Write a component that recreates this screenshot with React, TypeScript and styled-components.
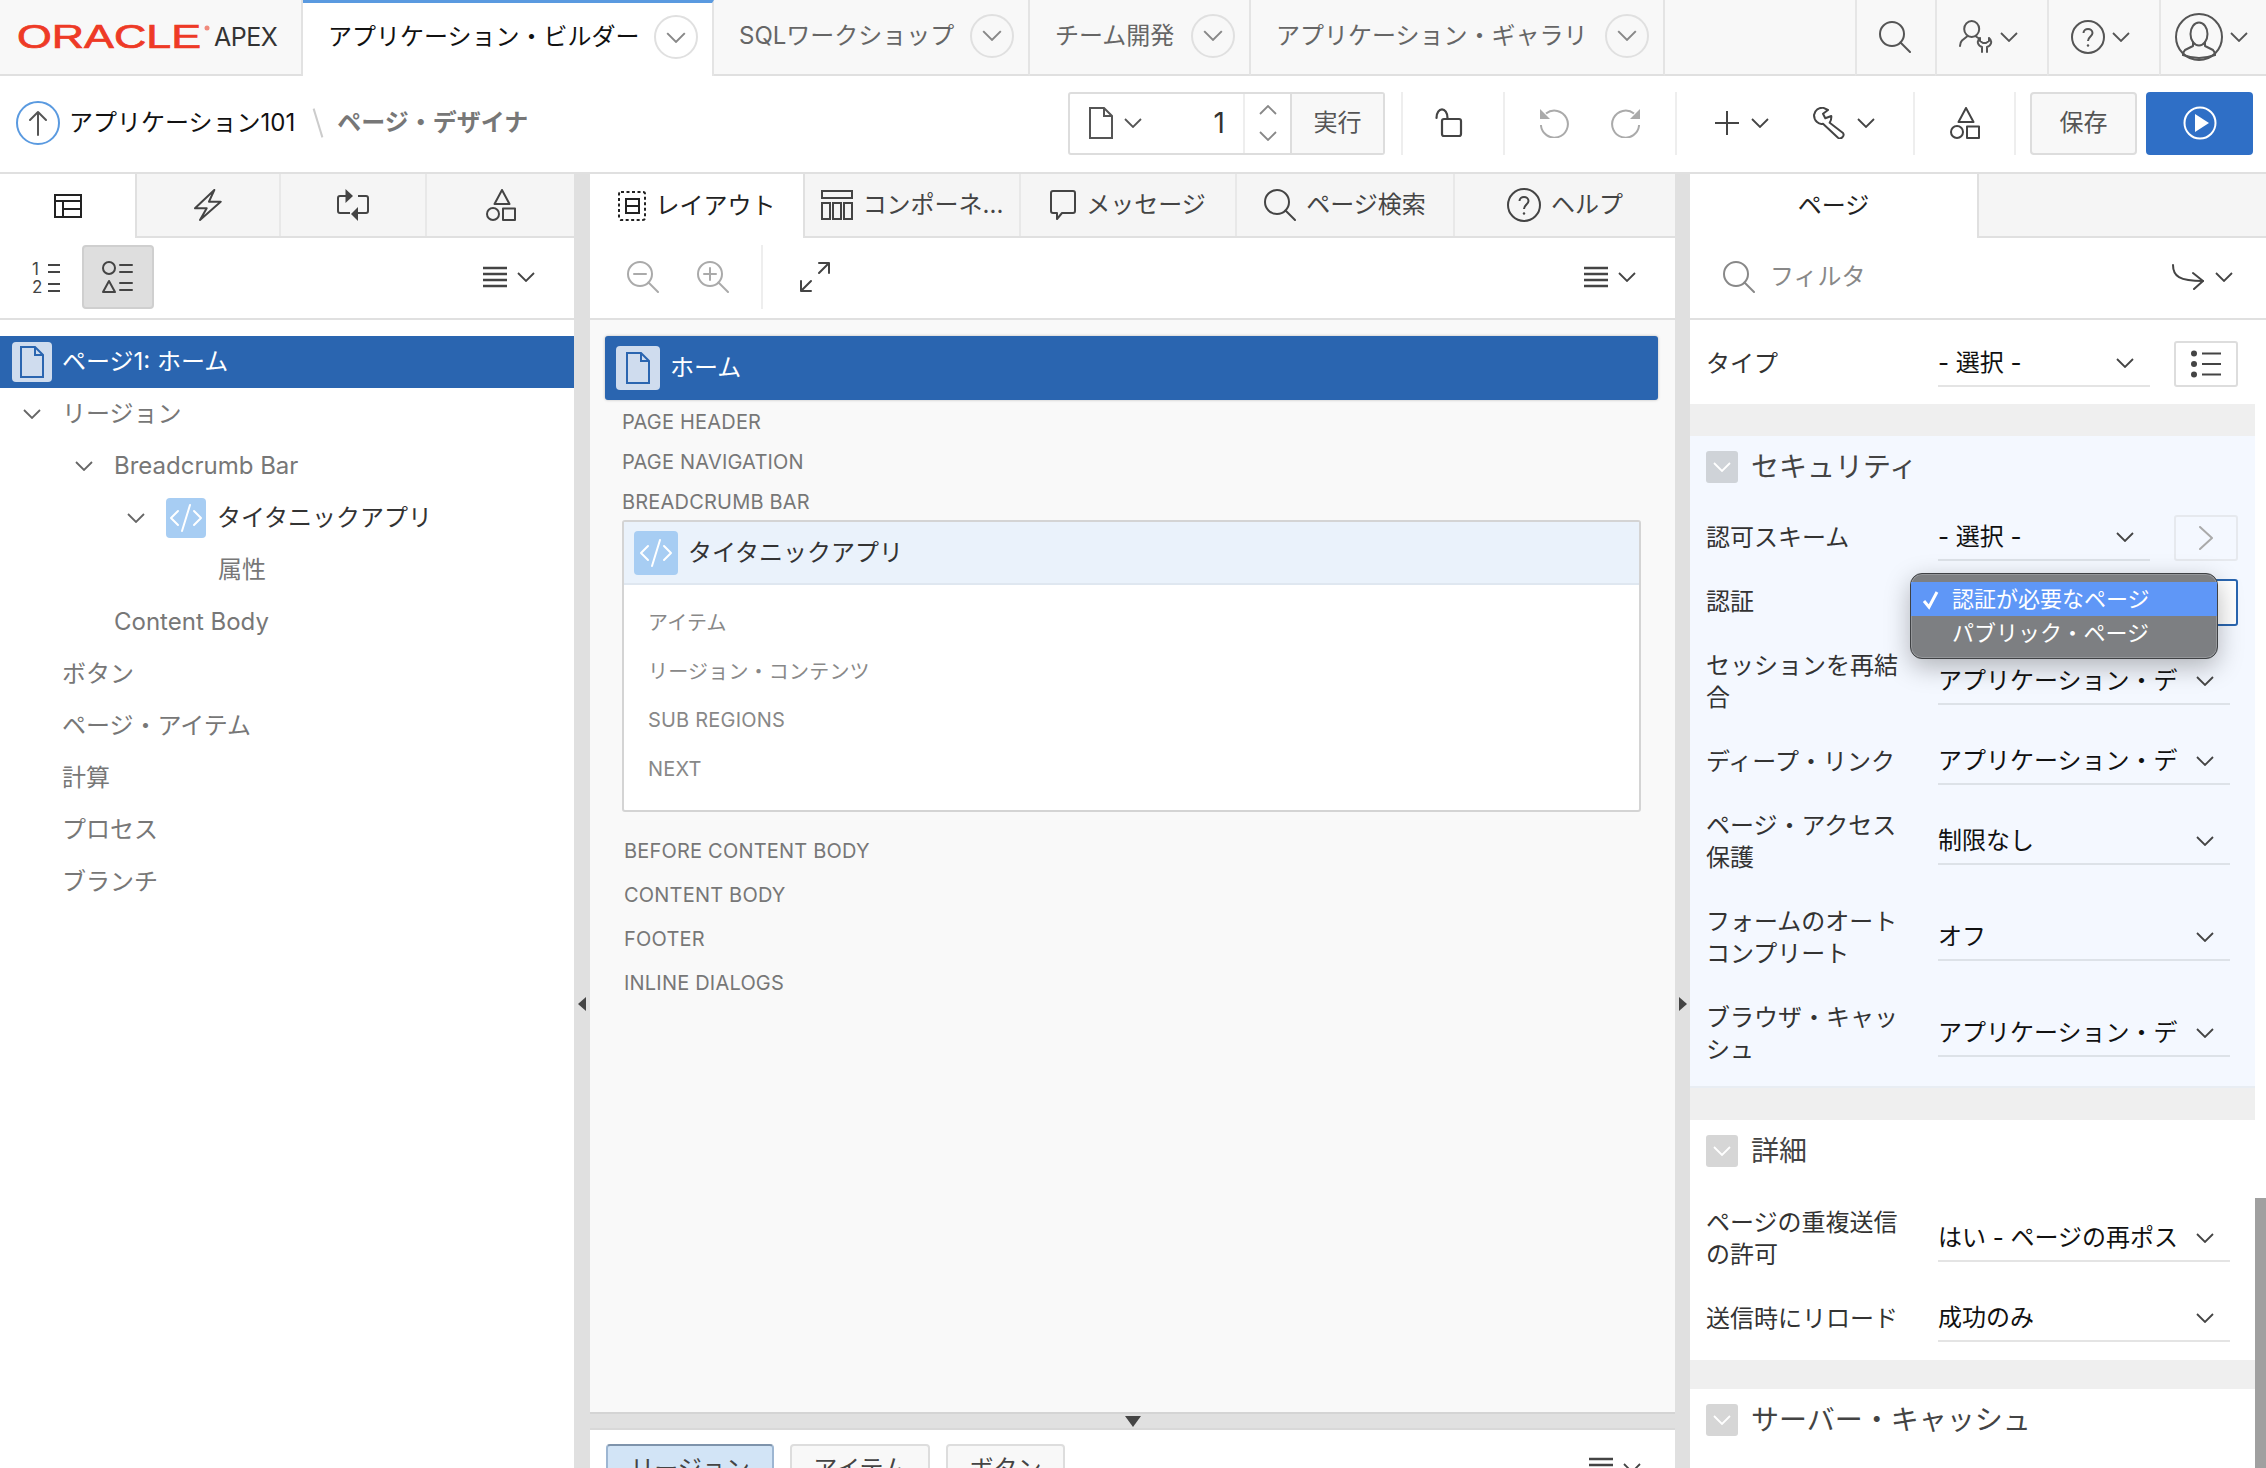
import {type FC, type ReactNode} from 'react';
import styled, {createGlobalStyle} from 'styled-components';

const GlobalStyle = createGlobalStyle`
    html, body {
        margin: 0;
        padding: 0;
        height: 1468px;
        overflow: hidden;
        background: #fff;
        font-family: Inter, "Noto Sans CJK JP", "Noto Sans", sans-serif;
        font-size: 24px;
        line-height: 32px;
        color: #333;
    }
    * {
        box-sizing: border-box;
    }
`;

const Shell = styled.div`
    width: 2266px;
    height: 1468px;
    display: flex;
    flex-direction: column;
    overflow: hidden;
`;

/* top navigation */
const TopBar = styled.header`
    height: 76px;
    flex: none;
    display: flex;
    background: #f8f8f8;
`;
const LogoCell = styled.div`
    width: 303px;
    display: flex;
    align-items: center;
    padding-left: 17px;
    gap: 1px;
    border-right: 2px solid #e2e2e2;
    border-bottom: 2px solid #e0e0e0;
`;
const ApexText = styled.span`
    font-size: 25px;
    color: #333;
    letter-spacing: -0.5px;
`;
const NavTab = styled.div<{$active?: boolean; $width: number}>`
    width: ${p => p.$width}px;
    display: flex;
    align-items: center;
    justify-content: space-between;
    padding: 0 14px ${p => (p.$active ? 5 : 3)}px 25px;
    font-size: 24px;
    white-space: nowrap;
    color: ${p => (p.$active ? '#111' : '#666')};
    background: ${p => (p.$active ? '#fff' : 'transparent')};
    border-right: 2px solid #e4e4e4;
    border-top: ${p => (p.$active ? '3px solid #5a9ae0' : 'none')};
    border-bottom: ${p => (p.$active ? 'none' : '2px solid #e0e0e0')};
`;
const NavCircle = styled.span`
    width: 44px;
    height: 44px;
    flex: none;
    display: flex;
    align-items: center;
    justify-content: center;
    border: 2px solid #e0e0e0;
    border-radius: 50%;
    color: #888;
`;
const TopSpacer = styled.div`
    flex: 1;
    border-bottom: 2px solid #e0e0e0;
`;
const HeadCell = styled.div<{$width: number; $trail?: number}>`
    width: ${p => p.$width}px;
    display: flex;
    align-items: center;
    justify-content: center;
    gap: 7px;
    padding-right: ${p => p.$trail ?? 0}px;
    color: #555;
    border-left: 2px solid #e6e6e6;
    border-bottom: 2px solid #e0e0e0;
`;

/* page toolbar */
const Toolbar = styled.div`
    height: 98px;
    flex: none;
    display: flex;
    align-items: center;
    padding: 0 13px 2px 16px;
    border-bottom: 2px solid #e0e0e0;
`;
const Crumbs = styled.div`
    display: flex;
    align-items: center;
    flex: 1;
    white-space: nowrap;
`;
const UpCircle = styled.span`
    width: 44px;
    height: 44px;
    display: flex;
    align-items: center;
    justify-content: center;
    border: 2px solid #5a9ae0;
    border-radius: 50%;
    color: #555;
    margin-right: 9px;
`;
const CrumbLink = styled.span`
    color: #111;
`;
const CrumbSlash = styled.span`
    width: 2px;
    height: 30px;
    margin: 0 18px 0 22px;
    background: #ccc;
    transform: rotate(-17deg);
`;
const CrumbCurrent = styled.span`
    color: #777;
    font-weight: 700;
`;
const PageField = styled.div`
    width: 317px;
    height: 63px;
    margin-right: 16px;
    display: flex;
    border: 2px solid #ddd;
    border-radius: 3px;
`;
const PagePicker = styled.div`
    width: 173px;
    display: flex;
    align-items: center;
    gap: 10px;
    padding: 0 18px;
    color: #555;
`;
const PageNumber = styled.span`
    margin-left: auto;
    font-size: 28px;
    color: #333;
`;
const Stepper = styled.div`
    width: 47px;
    display: flex;
    flex-direction: column;
    align-items: center;
    justify-content: center;
    gap: 16px;
    border-left: 2px solid #eee;
    color: #888;
`;
const RunButton = styled.div`
    flex: 1;
    display: flex;
    align-items: center;
    justify-content: center;
    background: #f8f8f8;
    border-left: 2px solid #ddd;
    color: #555;
`;
const ToolGroup = styled.div<{$width: number; $muted?: boolean; $gap?: number; $trail?: number}>`
    width: ${p => p.$width}px;
    height: 63px;
    display: flex;
    align-items: center;
    justify-content: center;
    gap: ${p => p.$gap ?? 0}px;
    padding-right: ${p => p.$trail ?? 0}px;
    color: ${p => (p.$muted ? '#aaa' : '#444')};
    border-left: 2px solid #eee;
`;
const ToolPair = styled.span`
    display: flex;
    align-items: center;
    gap: 12px;
`;
const SaveButton = styled.div`
    width: 107px;
    height: 63px;
    margin-left: 14px;
    display: flex;
    align-items: center;
    justify-content: center;
    background: #f8f8f8;
    border: 2px solid #ddd;
    border-radius: 4px;
    color: #555;
`;
const PlayButton = styled.div`
    width: 107px;
    height: 63px;
    margin-left: 9px;
    display: flex;
    align-items: center;
    justify-content: center;
    background: #2f6fc6;
    border-radius: 4px;
    color: #fff;
`;

/* workspace */
const Workspace = styled.main`
    flex: 1;
    min-height: 0;
    display: flex;
`;
const Panel = styled.section<{$width: number}>`
    width: ${p => p.$width}px;
    flex: none;
    display: flex;
    flex-direction: column;
    min-height: 0;
`;
const Gutter = styled.div<{$width: number}>`
    width: ${p => p.$width}px;
    flex: none;
    display: flex;
    justify-content: center;
    padding-top: 823px;
    background: #e0e0e0;
    color: #444;
`;
const TabStrip = styled.div`
    height: 64px;
    flex: none;
    display: flex;
    background: #f5f5f5;
    border-bottom: 2px solid #e0e0e0;
`;
const PanelTab = styled.div<{$active?: boolean; $width?: number}>`
    width: ${p => (p.$width ? `${p.$width}px` : 'auto')};
    flex: ${p => (p.$width ? 'none' : '1')};
    height: ${p => (p.$active ? '64px' : '62px')};
    display: flex;
    align-items: center;
    justify-content: center;
    gap: 10px;
    font-size: 24px;
    white-space: nowrap;
    color: ${p => (p.$active ? '#222' : '#444')};
    background: ${p => (p.$active ? '#fff' : 'transparent')};
    border-right: 2px solid ${p => (p.$active ? '#e0e0e0' : '#e8e8e8')};
    &:last-child {
        border-right: ${p => (p.$active ? '2px solid #e0e0e0' : 'none')};
    }
`;
const SubBar = styled.div<{$left?: number; $right?: number}>`
    height: 82px;
    flex: none;
    display: flex;
    align-items: center;
    padding: 0 ${p => p.$right ?? 39}px 2px ${p => p.$left ?? 30}px;
    border-bottom: 2px solid #e0e0e0;
    color: #444;
`;
const ViewButton = styled.span`
    width: 72px;
    height: 64px;
    margin-left: 20px;
    display: flex;
    align-items: center;
    justify-content: center;
    background: #dedede;
    border: 2px solid #cfcfcf;
    border-radius: 4px;
`;
const MenuButton = styled.span`
    display: flex;
    align-items: center;
    gap: 10px;
    margin-left: auto;
    color: #444;
`;
const MutedTools = styled.span`
    display: flex;
    gap: 38px;
    color: #aaa;
    padding-right: 32px;
    border-right: 2px solid #eee;
    height: 64px;
    align-items: center;
    margin-left: 7px;
`;
const ExpandSlot = styled.span`
    margin-left: 36px;
    display: flex;
    color: #444;
`;
const FilterIcon = styled.span`
    display: flex;
    color: #888;
`;

/* tree */
const Tree = styled.div`
    padding-top: 16px;
    display: flex;
    flex-direction: column;
`;
const TreeRow = styled.div<{$level: number; $selected?: boolean}>`
    height: 52px;
    display: flex;
    align-items: center;
    padding-left: ${p => 12 + p.$level * 52}px;
    font-size: 24px;
    color: ${p => (p.$selected ? '#fff' : '#777')};
    background: ${p => (p.$selected ? '#2a65b0' : 'transparent')};
`;
const TreeSlot = styled.span`
    width: 40px;
    height: 40px;
    flex: none;
    margin-right: 10px;
    display: flex;
    align-items: center;
    justify-content: center;
    color: #666;
`;
const NodeIcon = styled.span<{$kind: 'page' | 'code'; $size: number}>`
    width: ${p => p.$size}px;
    height: ${p => p.$size}px;
    flex: none;
    display: flex;
    align-items: center;
    justify-content: center;
    border-radius: 4px;
    background: ${p => (p.$kind === 'page' ? '#cfdcee' : '#a7cdf3')};
    color: ${p => (p.$kind === 'page' ? '#2a65b0' : '#fff')};
`;
const NodeLabel = styled.span`
    margin-left: 11px;
    color: #333;
`;

/* layout canvas */
const Canvas = styled.div`
    flex: 1;
    min-height: 0;
    padding: 16px 17px 0 15px;
    background: #f9f9f9;
    border-bottom: 2px solid #d4d4d4;
`;
const PageBar = styled.div`
    height: 64px;
    display: flex;
    align-items: center;
    gap: 10px;
    padding-left: 11px;
    background: #2a65b0;
    border-radius: 3px;
    color: #fff;
    box-shadow: 0 0 3px rgba(0, 0, 0, 0.25);
`;
const SlotLabel = styled.div<{$height: number; $inset: number}>`
    height: ${p => p.$height}px;
    display: flex;
    align-items: center;
    padding: 3px 0 0 ${p => p.$inset}px;
    font-size: 20px;
    letter-spacing: 0.2px;
    color: #777;
`;
const RegionBox = styled.div`
    height: 292px;
    margin: 0 17px 15px;
    background: #fff;
    border: 2px solid #d4d4d4;
    border-radius: 3px;
`;
const RegionHead = styled.div`
    height: 63px;
    display: flex;
    align-items: center;
    gap: 10px;
    padding-left: 10px;
    background: #eaf2fb;
    border-bottom: 2px solid #dfe7f0;
    color: #333;
`;
const RegionBody = styled.div`
    padding-top: 14px;
`;
const RegionSlot = styled.div`
    height: 48.5px;
    display: flex;
    align-items: center;
    padding-left: 24px;
    font-size: 20px;
    letter-spacing: 0.2px;
    color: #888;
`;
const Splitter = styled.div`
    height: 14px;
    flex: none;
    display: flex;
    align-items: center;
    justify-content: center;
    background: #e0e0e0;
    color: #444;
`;
const BottomBar = styled.div`
    height: 40px;
    flex: none;
    display: flex;
    align-items: flex-start;
    gap: 16px;
    padding: 14px 34px 0 16px;
    overflow: hidden;
    border-top: 2px solid #d8d8d8;
`;
const Pill = styled.div<{$active?: boolean; $width: number}>`
    width: ${p => p.$width}px;
    height: 50px;
    flex: none;
    display: flex;
    align-items: center;
    justify-content: center;
    font-size: 24px;
    color: #444;
    background: ${p => (p.$active ? '#d2e4f6' : '#f8f8f8')};
    border: 2px solid ${p => (p.$active ? '#9db6d2' : '#ddd')};
    border-top-color: ${p => (p.$active ? '#7e93ab' : '#ddd')};
    border-radius: 4px;
`;
const BottomMenu = styled(MenuButton)`
    margin-top: 13px;
`;

/* property editor */
const FilterText = styled.span`
    margin-left: 15px;
    font-size: 24px;
    color: #888;
`;
const PropsBody = styled.div`
    flex: 1;
    min-height: 0;
    display: flex;
`;
const PropsContent = styled.div`
    flex: 1;
    min-width: 0;
    background: #efefef;
`;
const ScrollTrack = styled.div`
    width: 12px;
    flex: none;
    display: flex;
    padding-top: 878px;
    background: #fff;
`;
const ScrollThumb = styled.div`
    flex: 1;
    background: #a0a0a0;
`;
const PropGroup = styled.div<{$tint?: boolean; $bottom: number; $top?: number; $gap: number}>`
    padding-top: ${p => p.$top ?? 0}px;
    padding-bottom: ${p => p.$bottom}px;
    margin-bottom: ${p => p.$gap}px;
    background: ${p => (p.$tint ? '#f4f8ff' : '#fff')};
    border-bottom: ${p => (p.$tint ? '2px solid #e8edf3' : 'none')};
`;
const GroupHead = styled.div<{$height: number}>`
    height: ${p => p.$height}px;
    display: flex;
    align-items: flex-start;
    padding: 15px 0 0 16px;
    gap: 13px;
    font-size: 28px;
    line-height: 32px;
    color: #444;
`;
const Collapse = styled.span<{$tint?: boolean}>`
    width: 32px;
    height: 32px;
    display: flex;
    align-items: center;
    justify-content: center;
    border-radius: 3px;
    color: #fff;
    background: ${p => (p.$tint ? '#cfd3d8' : '#d6d6d6')};
`;
const PropRow = styled.div<{$tall?: boolean}>`
    position: relative;
    height: ${p => (p.$tall ? 96 : 64)}px;
    display: flex;
    align-items: center;
    padding-left: 16px;
`;
const PropLabel = styled.div`
    width: 232px;
    flex: none;
    padding-right: 32px;
    font-size: 24px;
    line-height: 32px;
    color: #333;
`;
const SelectField = styled.div<{$short?: boolean; $tint?: boolean}>`
    width: ${p => (p.$short ? 212 : 292)}px;
    height: 46px;
    flex: none;
    display: flex;
    align-items: center;
    border-bottom: 2px solid ${p => (p.$tint ? '#dde2e8' : '#e4e4e4')};
    color: #111;
`;
const SelectValue = styled.span`
    flex: 1;
    min-width: 0;
    overflow: hidden;
    white-space: nowrap;
    font-size: 24px;
`;
const SelectArrow = styled.span`
    width: 52px;
    flex: none;
    display: flex;
    justify-content: center;
    padding-left: 2px;
    color: #444;
`;
const SideButton = styled.span<{$disabled?: boolean}>`
    width: 64px;
    height: 46px;
    flex: none;
    margin-left: 24px;
    display: flex;
    align-items: center;
    justify-content: center;
    border: 2px solid ${p => (p.$disabled ? '#e6e9ee' : '#ddd')};
    border-radius: 3px;
    background: ${p => (p.$disabled ? 'transparent' : '#fff')};
    color: ${p => (p.$disabled ? '#aaa' : '#444')};
`;
const FocusField = styled.div`
    width: 300px;
    height: 47px;
    flex: none;
    background: #fff;
    border: 2px solid #2a66b0;
    border-radius: 3px;
`;
const NativeMenu = styled.div`
    position: absolute;
    top: 3px;
    left: 220px;
    width: 308px;
    height: 86px;
    padding-top: 8px;
    font-size: 22px;
    color: #fff;
    background: #7d7f82;
    border: 1px solid #3f4144;
    border-radius: 12px;
    box-shadow: 0 8px 26px rgba(0, 0, 0, 0.28), inset 0 0 0 1px #95979a;
`;
const NativeOption = styled.div<{$checked?: boolean}>`
    height: 34px;
    display: flex;
    align-items: center;
    padding-left: 41px;
    position: relative;
    background: ${p => (p.$checked ? '#5f97f7' : 'transparent')};
`;
const NativeCheck = styled.svg`
    position: absolute;
    left: 11px;
    top: 8px;
`;

/* icons */
const Ico: FC<{w: number; h: number; sw?: number; children: ReactNode}> = ({w, h, sw = 2, children}) => (
    <svg width={w} height={h} viewBox={`0 0 ${w} ${h}`} fill="none" stroke="currentColor" strokeWidth={sw}
         strokeLinejoin="round" strokeLinecap="round">
        {children}
    </svg>
);
const Chev: FC<{size?: number; up?: boolean}> = ({size = 18, up}) => (
    <svg width={size} height={size / 2 + 1} viewBox="0 0 18 10" fill="none" stroke="currentColor" strokeWidth="1.8">
        <polyline points={up ? '1,9 9,1 17,9' : '1,1 9,9 17,1'}/>
    </svg>
);
const Magnifier: FC<{mark?: 'plus' | 'minus'}> = ({mark}) => (
    <Ico w={32} h={32}>
        <circle cx="13" cy="13" r="12"/>
        <line x1="21.5" y1="21.5" x2="31" y2="31"/>
        {mark && <line x1="7" y1="13" x2="19" y2="13"/>}
        {mark === 'plus' && <line x1="13" y1="7" x2="13" y2="19"/>}
    </Ico>
);
const Burger: FC = () => (
    <svg width="24" height="22" viewBox="0 0 24 22" fill="none" stroke="currentColor" strokeWidth="2.4">
        <path d="M0 2 H24 M0 8 H24 M0 14 H24 M0 20 H24"/>
    </svg>
);
const Shapes: FC = () => (
    <Ico w={30} h={32}>
        <path d="M16 1 L23.5 15 H8.5 Z"/>
        <circle cx="7" cy="25" r="6"/>
        <rect x="17" y="19.5" width="12" height="11.5"/>
    </Ico>
);
const PageGlyph: FC = () => (
    <svg width="26" height="32" viewBox="0 0 26 32" fill="none" stroke="currentColor" strokeWidth="2">
        <path d="M2 1 H16 L24 9 V31 H2 Z"/>
        <path d="M16 1 V9 H24"/>
    </svg>
);
const CodeGlyph: FC = () => (
    <Ico w={34} h={30}>
        <polyline points="9,8 2,15 9,22"/>
        <polyline points="25,8 32,15 25,22"/>
        <line x1="21" y1="2" x2="13" y2="28"/>
    </Ico>
);
const HelpGlyph: FC = () => (
    <svg width="34" height="34" viewBox="0 0 34 34" fill="none" stroke="currentColor" strokeWidth="2">
        <circle cx="17" cy="17" r="16"/>
        <path d="M12.5 13 C12.5 7.5 21.5 7.5 21.5 13 C21.5 16.5 17 16.5 17 21"/>
        <circle cx="17" cy="25.5" r="1.2" fill="currentColor" stroke="none"/>
    </svg>
);
const AdminGlyph: FC = () => (
    <Ico w={34} h={34} sw={2}>
        <ellipse cx="12.7" cy="9" rx="7.5" ry="8"/>
        <path d="M8 16.5 L3 20.5 C1.5 22 1 24 1 26"/>
        <path d="M17 16.5 L20 18.5"/>
        <path d="M21 18 C17 21 19 26 23 27 V32 M30 18 C34 21 32 26 28 27 V32 M21 18 V21 L24 23 H27 L30 21 V18"/>
    </Ico>
);
const AvatarGlyph: FC = () => (
    <Ico w={48} h={48}>
        <circle cx="24" cy="24" r="23"/>
        <ellipse cx="24" cy="21" rx="8.5" ry="11.5"/>
        <path d="M18 29 V33 L10 37 C8.5 38.5 8 40 8 42 M30 29 V33 L38 37 C39.5 38.5 40 40 40 42"/>
        <path d="M8 42 Q24 48 40 42"/>
    </Ico>
);
const LockGlyph: FC = () => (
    <Ico w={28} h={30} sw={2.2}>
        <rect x="7" y="11" width="19" height="17" rx="2"/>
        <path d="M1.5 10 C1.5 -1.5 12.5 -1.5 12.5 10"/>
    </Ico>
);
const UndoGlyph: FC<{flip?: boolean}> = ({flip}) => (
    <svg width="29" height="29" viewBox="0 0 29 29" fill="none" stroke="currentColor" strokeWidth="2"
         transform={flip ? 'scale(-1 1)' : undefined}>
        <path d="M6 4.5 A13.5 13.5 0 1 1 0.9 16"/>
        <path d="M0 0 V10 H10 Z" fill="currentColor" stroke="none"/>
    </svg>
);
const PlusGlyph: FC = () => (
    <svg width="24" height="24" viewBox="0 0 24 24" fill="none" stroke="currentColor" strokeWidth="2">
        <path d="M12 0 V24 M0 12 H24"/>
    </svg>
);
const WrenchGlyph: FC = () => (
    <Ico w={32} h={32}>
        <path d="M1 8 C2 3 6 0.5 10 0.7 L15 3 L10 6.7 L12.3 11.3 L18.3 9 C18.5 12 18 14 16.7 15.7 L30 26 C32 29 28 33 25 30.7 L10 16.7 C6 18 1 14 1 8 Z"/>
    </Ico>
);
const PlayGlyph: FC = () => (
    <svg width="34" height="34" viewBox="0 0 34 34" fill="none" stroke="currentColor" strokeWidth="2">
        <circle cx="17" cy="17" r="15.5"/>
        <path d="M12 8 L26 17 L12 26 Z" fill="currentColor" stroke="none"/>
    </svg>
);
const TableGlyph: FC = () => (
    <svg width="28" height="24" viewBox="0 0 28 24" fill="none" stroke="currentColor" strokeWidth="2">
        <rect x="1" y="1" width="26" height="22"/>
        <path d="M1 7 H27 M9 7 V23 M9 15 H27"/>
    </svg>
);
const BoltGlyph: FC = () => (
    <Ico w={28} h={32}>
        <path d="M20.3 1 L1 19.3 H12.7 L6 31 L26.7 12.7 H15 Z"/>
    </Ico>
);
const SyncGlyph: FC = () => (
    <svg width="32" height="32" viewBox="0 0 32 32" fill="none" stroke="currentColor" strokeWidth="2">
        <path d="M9 7 H3 Q1 7 1 9 V22 Q1 24 3 24 H13"/>
        <path d="M21 7 H29 Q31 7 31 9 V22 Q31 24 29 24 H21"/>
        <path d="M8.5 0 V14 L16 7 Z" fill="currentColor" stroke="none"/>
        <path d="M21 18 V32 L14 25 Z" fill="currentColor" stroke="none"/>
    </svg>
);
const NumberList: FC = () => (
    <svg width="32" height="46" viewBox="0 0 32 46" fill="none" stroke="currentColor" strokeWidth="2">
        <text x="2" y="21" fontSize="17" fill="currentColor" stroke="none" fontFamily="Inter, sans-serif">1</text>
        <text x="2" y="39" fontSize="17" fill="currentColor" stroke="none" fontFamily="Inter, sans-serif">2</text>
        <path d="M18 11 H30 M18 18 H30 M18 30 H30 M18 37 H30"/>
    </svg>
);
const ShapeList: FC = () => (
    <Ico w={32} h={34}>
        <circle cx="7" cy="8" r="6"/>
        <path d="M7 21 L13 32 H1 Z"/>
        <path d="M18 5 H30 M18 12 H30 M18 23 H30 M18 30 H30"/>
    </Ico>
);
const ExpandGlyph: FC = () => (
    <Ico w={32} h={32}>
        <path d="M20 2 H30 V12 M30 2 L20 12"/>
        <path d="M12 30 H2 V20 M2 30 L12 20"/>
    </Ico>
);
const LayoutGlyph: FC = () => (
    <svg width="28" height="30" viewBox="0 0 28 30" fill="none" stroke="currentColor" strokeWidth="2">
        <rect x="1" y="1" width="26" height="28" rx="2" strokeDasharray="3 2.5"/>
        <rect x="8" y="8" width="13" height="14"/>
        <line x1="8" y1="15" x2="21" y2="15"/>
    </svg>
);
const ComponentsGlyph: FC = () => (
    <svg width="32" height="30" viewBox="0 0 32 30" fill="none" stroke="currentColor" strokeWidth="2">
        <rect x="1" y="1" width="30" height="7"/>
        <rect x="1" y="13" width="8" height="16"/>
        <rect x="12" y="13" width="8" height="16"/>
        <rect x="23" y="13" width="8" height="16"/>
    </svg>
);
const BubbleGlyph: FC = () => (
    <Ico w={26} h={30}>
        <path d="M3 1 H23 C24 1 25 2 25 3 V21 C25 22 24 23 23 23 H12 L7 29 V23 H3 C2 23 1 22 1 21 V3 C1 2 2 1 3 1 Z"/>
    </Ico>
);
const GotoGlyph: FC = () => (
    <Ico w={34} h={26}>
        <path d="M2 1 C2 12 8 17 32 17"/>
        <polyline points="22,9 32,17 23,25"/>
    </Ico>
);
const DotList: FC = () => (
    <svg width="30" height="28" viewBox="0 0 30 28" fill="none" stroke="currentColor" strokeWidth="2">
        <circle cx="3" cy="3.5" r="3" fill="currentColor" stroke="none"/>
        <circle cx="3" cy="14" r="3" fill="currentColor" stroke="none"/>
        <circle cx="3" cy="24.5" r="3" fill="currentColor" stroke="none"/>
        <path d="M11 3.5 H30 M11 14 H30 M11 24.5 H30"/>
    </svg>
);
const ArrowUp: FC = () => (
    <Ico w={18} h={26}>
        <path d="M9 25 V2 M1 10 L9 2 L17 10"/>
    </Ico>
);
const SideArrow: FC = () => (
    <Ico w={14} h={24}>
        <polyline points="1,1 13,12 1,23"/>
    </Ico>
);
const Triangle: FC<{dir: 'left' | 'right' | 'down'}> = ({dir}) => (
    dir === 'down'
        ? <svg width="16" height="11" viewBox="0 0 16 11" fill="currentColor"><path d="M0 0 H16 L8 11 Z"/></svg>
        : <svg width="8" height="14" viewBox="0 0 8 14" fill="currentColor">
            <path d={dir === 'left' ? 'M8 0 V14 L0 7 Z' : 'M0 0 V14 L8 7 Z'}/>
        </svg>
);
const OracleLogo: FC = () => (
    <svg width="196" height="40" viewBox="0 0 196 40">
        <text x="0" y="31" fontFamily="Liberation Sans, sans-serif" fontSize="33" fill="#ee3a26" stroke="#ee3a26"
              strokeWidth="0.7" textLength="184" lengthAdjust="spacingAndGlyphs">ORACLE</text>
        <circle cx="190" cy="11" r="2.5" fill="#f08a7c"/>
    </svg>
);

const Select: FC<{value: string; short?: boolean; tint?: boolean}> = ({value, short, tint}) => (
    <SelectField $short={short} $tint={tint}>
        <SelectValue>{value}</SelectValue>
        <SelectArrow><Chev size={18}/></SelectArrow>
    </SelectField>
);
const Field: FC<{label: string; value: string; tall?: boolean; tint?: boolean}> = ({label, value, tall, tint}) => (
    <PropRow $tall={tall}>
        <PropLabel>{label}</PropLabel>
        <Select value={value} tint={tint}/>
    </PropRow>
);
const Group: FC<{title: string; tint?: boolean; height: number}> = ({title, tint, height}) => (
    <GroupHead $height={height}>
        <Collapse $tint={tint}><Chev size={18}/></Collapse>
        {title}
    </GroupHead>
);

const appDefault = 'アプリケーション・デフォルトの使用';

const App: FC = () => (
    <Shell lang="ja">
        <GlobalStyle/>
        <TopBar>
            <LogoCell>
                <OracleLogo/>
                <ApexText>APEX</ApexText>
            </LogoCell>
            <NavTab $active $width={411}>アプリケーション・ビルダー<NavCircle><Chev size={20}/></NavCircle></NavTab>
            <NavTab $width={316}>SQLワークショップ<NavCircle><Chev size={20}/></NavCircle></NavTab>
            <NavTab $width={221}>チーム開発<NavCircle><Chev size={20}/></NavCircle></NavTab>
            <NavTab $width={414}>アプリケーション・ギャラリ<NavCircle><Chev size={20}/></NavCircle></NavTab>
            <TopSpacer/>
            <HeadCell $width={80} $trail={2}><Magnifier/></HeadCell>
            <HeadCell $width={112} $trail={8}><AdminGlyph/><Chev/></HeadCell>
            <HeadCell $width={112} $trail={8}><HelpGlyph/><Chev/></HeadCell>
            <HeadCell $width={107} $trail={5}><AvatarGlyph/><Chev/></HeadCell>
        </TopBar>

        <Toolbar>
            <Crumbs>
                <UpCircle><ArrowUp/></UpCircle>
                <CrumbLink>アプリケーション101</CrumbLink>
                <CrumbSlash/>
                <CrumbCurrent>ページ・デザイナ</CrumbCurrent>
            </Crumbs>
            <PageField>
                <PagePicker><PageGlyph/><Chev/><PageNumber>1</PageNumber></PagePicker>
                <Stepper><Chev up/><Chev/></Stepper>
                <RunButton>実行</RunButton>
            </PageField>
            <ToolGroup $width={102} $trail={8}><LockGlyph/></ToolGroup>
            <ToolGroup $width={172} $muted $gap={42}><UndoGlyph/><UndoGlyph flip/></ToolGroup>
            <ToolGroup $width={238} $gap={44}>
                <ToolPair><PlusGlyph/><Chev/></ToolPair>
                <ToolPair><WrenchGlyph/><Chev/></ToolPair>
            </ToolGroup>
            <ToolGroup $width={101}><Shapes/></ToolGroup>
            <ToolGroup $width={2}/>
            <SaveButton>保存</SaveButton>
            <PlayButton><PlayGlyph/></PlayButton>
        </Toolbar>

        <Workspace>
            <Panel $width={574}>
                <TabStrip>
                    <PanelTab $active $width={137}><TableGlyph/></PanelTab>
                    <PanelTab $width={144}><BoltGlyph/></PanelTab>
                    <PanelTab $width={146}><SyncGlyph/></PanelTab>
                    <PanelTab $width={147}><Shapes/></PanelTab>
                </TabStrip>
                <SubBar>
                    <NumberList/>
                    <ViewButton><ShapeList/></ViewButton>
                    <MenuButton><Burger/><Chev/></MenuButton>
                </SubBar>
                <Tree>
                    <TreeRow $level={0} $selected>
                        <TreeSlot><NodeIcon $kind="page" $size={40}><PageGlyph/></NodeIcon></TreeSlot>
                        ページ1: ホーム
                    </TreeRow>
                    <TreeRow $level={0}><TreeSlot><Chev/></TreeSlot>リージョン</TreeRow>
                    <TreeRow $level={1}><TreeSlot><Chev/></TreeSlot>Breadcrumb Bar</TreeRow>
                    <TreeRow $level={2}>
                        <TreeSlot><Chev/></TreeSlot>
                        <NodeIcon $kind="code" $size={40}><CodeGlyph/></NodeIcon>
                        <NodeLabel>タイタニックアプリ</NodeLabel>
                    </TreeRow>
                    <TreeRow $level={3}><TreeSlot/>属性</TreeRow>
                    <TreeRow $level={1}><TreeSlot/>Content Body</TreeRow>
                    <TreeRow $level={0}><TreeSlot/>ボタン</TreeRow>
                    <TreeRow $level={0}><TreeSlot/>ページ・アイテム</TreeRow>
                    <TreeRow $level={0}><TreeSlot/>計算</TreeRow>
                    <TreeRow $level={0}><TreeSlot/>プロセス</TreeRow>
                    <TreeRow $level={0}><TreeSlot/>ブランチ</TreeRow>
                </Tree>
            </Panel>
            <Gutter $width={16}><Triangle dir="left"/></Gutter>

            <Panel $width={1085}>
                <TabStrip>
                    <PanelTab $active $width={215}><LayoutGlyph/>レイアウト</PanelTab>
                    <PanelTab $width={216}><ComponentsGlyph/>コンポーネ...</PanelTab>
                    <PanelTab $width={216}><BubbleGlyph/>メッセージ</PanelTab>
                    <PanelTab $width={218}><Magnifier/>ページ検索</PanelTab>
                    <PanelTab><HelpGlyph/>ヘルプ</PanelTab>
                </TabStrip>
                <SubBar>
                    <MutedTools>
                        <Magnifier mark="minus"/>
                        <Magnifier mark="plus"/>
                    </MutedTools>
                    <ExpandSlot><ExpandGlyph/></ExpandSlot>
                    <MenuButton><Burger/><Chev/></MenuButton>
                </SubBar>
                <Canvas>
                    <PageBar>
                        <NodeIcon $kind="page" $size={44}><PageGlyph/></NodeIcon>
                        ホーム
                    </PageBar>
                    <SlotLabel $height={40} $inset={17}>PAGE HEADER</SlotLabel>
                    <SlotLabel $height={40} $inset={17}>PAGE NAVIGATION</SlotLabel>
                    <SlotLabel $height={40} $inset={17}>BREADCRUMB BAR</SlotLabel>
                    <RegionBox>
                        <RegionHead>
                            <NodeIcon $kind="code" $size={44}><CodeGlyph/></NodeIcon>
                            タイタニックアプリ
                        </RegionHead>
                        <RegionBody>
                            <RegionSlot>アイテム</RegionSlot>
                            <RegionSlot>リージョン・コンテンツ</RegionSlot>
                            <RegionSlot>SUB REGIONS</RegionSlot>
                            <RegionSlot>NEXT</RegionSlot>
                        </RegionBody>
                    </RegionBox>
                    <SlotLabel $height={44} $inset={19}>BEFORE CONTENT BODY</SlotLabel>
                    <SlotLabel $height={44} $inset={19}>CONTENT BODY</SlotLabel>
                    <SlotLabel $height={44} $inset={19}>FOOTER</SlotLabel>
                    <SlotLabel $height={44} $inset={19}>INLINE DIALOGS</SlotLabel>
                </Canvas>
                <Splitter><Triangle dir="down"/></Splitter>
                <BottomBar>
                    <Pill $active $width={168}>リージョン</Pill>
                    <Pill $width={140}>アイテム</Pill>
                    <Pill $width={119}>ボタン</Pill>
                    <BottomMenu><Burger/><Chev/></BottomMenu>
                </BottomBar>
            </Panel>
            <Gutter $width={15}><Triangle dir="right"/></Gutter>

            <Panel $width={577}>
                <TabStrip>
                    <PanelTab $active $width={289}>ページ</PanelTab>
                </TabStrip>
                <SubBar $left={33} $right={34}>
                    <FilterIcon><Magnifier/></FilterIcon>
                    <FilterText>フィルタ</FilterText>
                    <MenuButton><GotoGlyph/><Chev/></MenuButton>
                </SubBar>
                <PropsBody>
                    <PropsContent>
                        <PropGroup $top={12} $bottom={8} $gap={32}>
                            <PropRow>
                                <PropLabel>タイプ</PropLabel>
                                <Select value="- 選択 -" short/>
                                <SideButton><DotList/></SideButton>
                            </PropRow>
                        </PropGroup>
                        <PropGroup $tint $bottom={4} $gap={32}>
                            <Group title="セキュリティ" tint height={70}/>
                            <PropRow>
                                <PropLabel>認可スキーム</PropLabel>
                                <Select value="- 選択 -" short tint/>
                                <SideButton $disabled><SideArrow/></SideButton>
                            </PropRow>
                            <PropRow>
                                <PropLabel>認証</PropLabel>
                                <FocusField/>
                                <NativeMenu>
                                    <NativeOption $checked>
                                        <NativeCheck width="20" height="20" viewBox="0 0 20 20" fill="none" stroke="#fff" strokeWidth="3">
                                            <path d="M2 11 L7 17 L15 2"/>
                                        </NativeCheck>
                                        認証が必要なページ
                                    </NativeOption>
                                    <NativeOption>パブリック・ページ</NativeOption>
                                </NativeMenu>
                            </PropRow>
                            <Field label="セッションを再結合" value={appDefault} tall tint/>
                            <Field label="ディープ・リンク" value={appDefault} tint/>
                            <Field label="ページ・アクセス保護" value="制限なし" tall tint/>
                            <Field label="フォームのオートコンプリート" value="オフ" tall tint/>
                            <Field label="ブラウザ・キャッシュ" value={appDefault} tall tint/>
                        </PropGroup>
                        <PropGroup $bottom={9} $gap={29}>
                            <Group title="詳細" height={71}/>
                            <Field label="ページの重複送信の許可" value="はい - ページの再ポストを許可" tall/>
                            <Field label="送信時にリロード" value="成功のみ"/>
                        </PropGroup>
                        <PropGroup $bottom={60} $gap={0}>
                            <Group title="サーバー・キャッシュ" height={70}/>
                        </PropGroup>
                    </PropsContent>
                    <ScrollTrack><ScrollThumb/></ScrollTrack>
                </PropsBody>
            </Panel>
        </Workspace>
    </Shell>
);

export default App;
